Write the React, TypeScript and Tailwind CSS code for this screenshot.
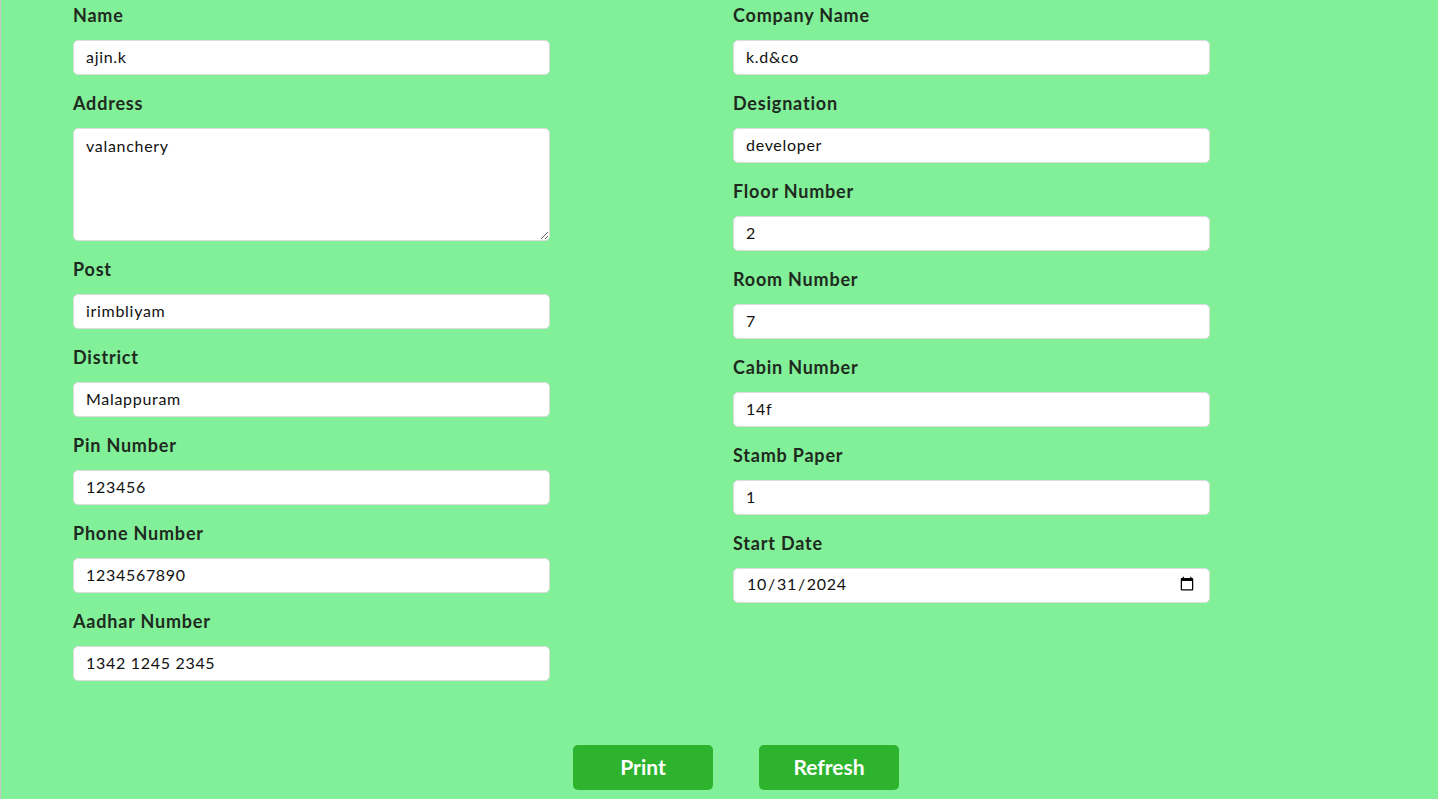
import React from 'react';

// Campos da coluna esquerda e direita
const leftFields = [
  { label: 'Name', value: 'ajin.k' },
  { label: 'Address', value: 'valanchery', area: true },
  { label: 'Post', value: 'irimbliyam' },
  { label: 'District', value: 'Malappuram' },
  { label: 'Pin Number', value: '123456' },
  { label: 'Phone Number', value: '1234567890' },
  { label: 'Aadhar Number', value: '1342 1245 2345' },
];

const rightFields = [
  { label: 'Company Name', value: 'k.d&co' },
  { label: 'Designation', value: 'developer' },
  { label: 'Floor Number', value: '2' },
  { label: 'Room Number', value: '7' },
  { label: 'Cabin Number', value: '14f' },
  { label: 'Stamb Paper', value: '1' },
  { label: 'Start Date', value: '2024-10-31', date: true },
];

type Field = { label: string; value: string; area?: boolean; date?: boolean };

const inputCls =
  'w-full bg-white border border-[#dcdcdc] rounded-[5px] px-3 text-[16px] tracking-[0.7px] text-[#111] outline-none';

function FieldBlock({ field }: { field: Field }) {
  return (
    <div className="flex flex-col mb-[16px]">
      <label className="text-[18px] leading-[24px] font-bold tracking-[0.8px] text-[#1e2a1e] mb-[13px]">
        {field.label}
      </label>
      {field.area ? (
        <textarea
          defaultValue={field.value}
          className={`${inputCls} h-[113px] pt-[5px] leading-[24px]`}
        />
      ) : (
        <input
          type={field.date ? 'date' : 'text'}
          defaultValue={field.value}
          className={`${inputCls} h-[35px] pb-[3px]`}
        />
      )}
    </div>
  );
}

export default function App() {
  return (
    <div
      className="min-h-[799px] bg-[#82ef99] border-l border-[#c8c8c8]"
      style={{ fontFamily: 'Lato, "Open Sans", sans-serif' }}
    >
      <div className="flex pl-[72px] pt-[3px] gap-[183px]">
        <div className="w-[477px] flex flex-col">
          {leftFields.map((f) => (
            <FieldBlock key={f.label} field={f} />
          ))}
        </div>
        <div className="w-[477px] flex flex-col">
          {rightFields.map((f) => (
            <FieldBlock key={f.label} field={f} />
          ))}
        </div>
      </div>

      <div className="flex pl-[572px] pt-[48px] gap-[46px]">
        <button className="w-[140px] h-[45px] rounded-[5px] bg-[#2db32d] text-white text-[21px] font-bold pb-[2px]">
          Print
        </button>
        <button className="w-[140px] h-[45px] rounded-[5px] bg-[#2db32d] text-white text-[21px] font-bold pb-[2px]">
          Refresh
        </button>
      </div>
    </div>
  );
}
